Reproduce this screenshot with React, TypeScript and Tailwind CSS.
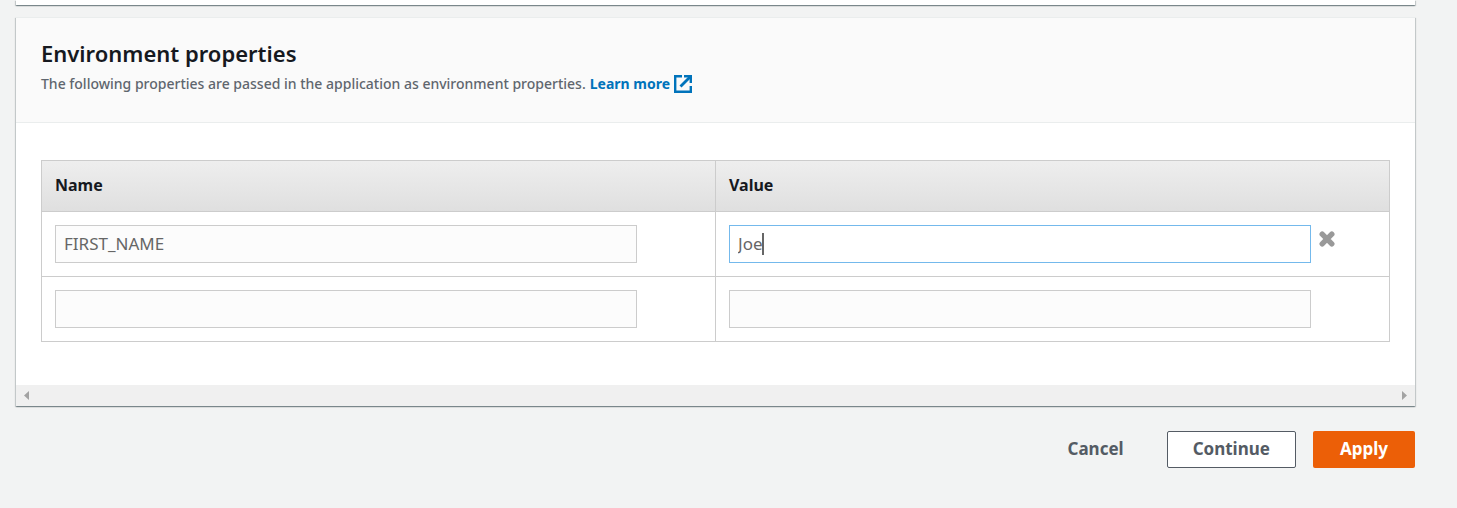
import { useState } from 'react';

type Property = { name: string; value: string };

const panelShadow =
  'shadow-[0_1px_1px_0_rgba(0,28,36,0.3),1px_1px_1px_0_rgba(0,28,36,0.15),-1px_1px_1px_0_rgba(0,28,36,0.15)]';

const inputClass =
  'block h-[38px] w-full border border-[#ccc] bg-[#fcfcfc] px-2 pb-0.5 text-[17px] text-[#666] caret-transparent outline-none';

function ExternalIcon() {
  return (
    <svg viewBox="0 0 18 18" className="h-[18px] w-[18px]" fill="none" stroke="#0073bb" strokeWidth="2.4" aria-hidden="true">
      <path d="M8 1.2H1.2V16.8H16.8V11" />
      <path d="M10 1.2H16.8V8" />
      <path d="M16.5 1.5L6.5 11.5" strokeWidth="2.8" />
    </svg>
  );
}

function RemoveIcon() {
  return (
    <svg viewBox="0 0 16 16" className="h-4 w-4" stroke="#999" strokeWidth="5.4" strokeLinecap="round" aria-hidden="true">
      <path d="M3.2 3.2L12.8 12.8M12.8 3.2L3.2 12.8" />
    </svg>
  );
}

export default function App() {
  const [rows, setRows] = useState<Property[]>([
    { name: 'FIRST_NAME', value: 'Joe' },
    { name: '', value: '' },
  ]);

  const update = (index: number, key: keyof Property, text: string) =>
    setRows(rows.map((row, i) => (i === index ? { ...row, [key]: text } : row)));

  return (
    <div className="min-h-screen bg-[#f2f3f3] pr-[42px] pl-4 font-['Noto_Sans',sans-serif] text-[#16191f]">
      <div className={`h-[5px] bg-white ${panelShadow}`} />

      <section className={`mt-3 bg-white ${panelShadow}`}>
        <header className="border-t border-b border-[#eaeded] bg-[#fafafa] px-[25px] pt-[21px] pb-[27px]">
          <h2 className="text-[22px] leading-7 font-semibold">Environment properties</h2>
          <p className="flex items-center gap-1 pt-1.5 text-sm leading-[22px] font-medium text-[#5f666e]">
            The following properties are passed in the application as environment properties.
            <a href="#learn-more" className="flex items-center gap-1 font-bold text-[#0073bb]">
              Learn more
              <ExternalIcon />
            </a>
          </p>
        </header>

        <div className="px-[25px] pt-[37px] pb-[43px]">
          <table className="w-full table-fixed border-collapse border border-[#ccc] text-left">
            <thead>
              <tr className="h-[51px] bg-linear-to-b from-[#eee] to-[#dfdfdf]">
                <th className="border border-[#ccc] px-[13px] pb-0.5 text-base font-bold">Name</th>
                <th className="border border-[#ccc] px-[13px] pb-0.5 text-base font-bold">Value</th>
              </tr>
            </thead>
            <tbody>
              {rows.map((row, i) => (
                <tr key={i} className="h-[65px]">
                  <td className="border border-[#ccc] px-[13px]">
                    <div className="w-[90%]">
                      <input
                        aria-label={`Name ${i + 1}`}
                        className={inputClass}
                        value={row.name}
                        onChange={(e) => update(i, 'name', e.target.value)}
                      />
                    </div>
                  </td>
                  <td className="border border-[#ccc] px-[13px]">
                    <div className="flex items-start gap-2">
                      <div className="relative w-[90%]">
                        <input
                          aria-label={`Value ${i + 1}`}
                          className={i === 0 ? `${inputClass} border-[#74b9ec]! bg-white!` : inputClass}
                          value={row.value}
                          onChange={(e) => update(i, 'value', e.target.value)}
                        />
                        {i === 0 && (
                          <span className="pointer-events-none absolute top-2 left-2 flex h-[22px] border-r-2 border-[#666]" aria-hidden="true">
                            <span className="invisible text-[17px]">{row.value}</span>
                          </span>
                        )}
                      </div>
                      {i === 0 && (
                        <button type="button" aria-label="Remove property" className="pt-1.5">
                          <RemoveIcon />
                        </button>
                      )}
                    </div>
                  </td>
                </tr>
              ))}
            </tbody>
          </table>
        </div>

        <div className="flex h-[21px] items-center justify-between bg-[#f0f0f0] px-2">
          <svg viewBox="0 0 5 9" className="h-[9px] w-[5px]" fill="#a3a3a3" aria-hidden="true">
            <path d="M5 0V9L0 4.5Z" />
          </svg>
          <svg viewBox="0 0 5 9" className="h-[9px] w-[5px]" fill="#a3a3a3" aria-hidden="true">
            <path d="M0 0V9L5 4.5Z" />
          </svg>
        </div>
      </section>

      <div className="flex justify-end pt-[25px] pb-10 text-[17px] font-bold text-[#545b64]">
        <button type="button" className="h-[37px] px-[26px] pb-0.5">Cancel</button>
        <button type="button" className="ml-[17px] h-[37px] rounded-xs border border-[#545b64] bg-white px-[25px] pb-0.5">
          Continue
        </button>
        <button type="button" className="ml-[17px] h-[37px] rounded-xs bg-[#ec5f07] px-[27px] pb-0.5 text-white">
          Apply
        </button>
      </div>
    </div>
  );
}
